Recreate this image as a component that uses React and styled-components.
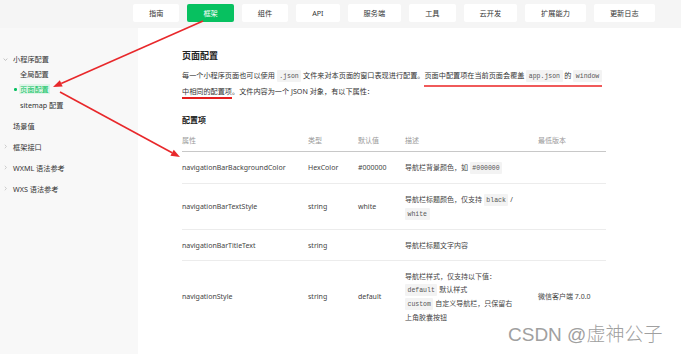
import React from 'react';
import styled, { createGlobalStyle } from 'styled-components';

const Global = createGlobalStyle`
  html, body { margin: 0; padding: 0; background: #fff; }
  body { font-family: "Noto Sans", "Noto Sans CJK SC", sans-serif; color: #333; }
  * { box-sizing: border-box; }
`;

const Page = styled.div`
  position: relative;
  width: 681px;
  height: 354px;
  overflow: hidden;
  display: flex;
  flex-direction: column;
  background: #fff;
`;

const TopBar = styled.nav`
  height: 28px;
  flex: none;
  background: #f5f5f5;
  display: flex;
  align-items: flex-start;
  gap: 8px;
  padding: 4px 0 0 133px;
`;

const NavButton = styled.div`
  height: 18px;
  padding: 0 16px;
  border-radius: 2px;
  background: ${p => (p.$active ? '#07c160' : '#fff')};
  color: ${p => (p.$active ? '#fff' : '#333')};
  font-size: 7.2px;
  line-height: 18px;
  white-space: nowrap;
`;

const Body = styled.div`
  flex: 1;
  display: flex;
`;

const Sidebar = styled.aside`
  width: 138px;
  flex: none;
  background: #f8f8f8;
  padding-top: 23.5px;
  display: flex;
  flex-direction: column;
  gap: 6px;
  font-size: 7.2px;
`;

const SectionHead = styled.div`
  height: 15px;
  display: flex;
  align-items: center;
  gap: 5px;
  padding-left: ${p => (p.$plain ? '13px' : '3px')};
  color: #333;
  white-space: nowrap;
`;

const Chevron = styled.svg`
  width: 5px;
  height: 5px;
  flex: none;
`;

const SubItem = styled.div`
  height: 15.3px;
  display: flex;
  align-items: center;
  padding-left: 14px;
  color: ${p => (p.$active ? '#07c160' : '#333')};
  white-space: nowrap;
`;

const Dot = styled.span`
  width: 2.5px;
  height: 2.5px;
  border-radius: 50%;
  margin-right: 3.5px;
  background: ${p => (p.$on ? '#07c160' : 'transparent')};
`;

const ActiveLabel = styled.span`
  background: #ddf5e7;
  padding: 0 1px;
  margin-left: -1px;
`;

const Main = styled.main`
  flex: 1;
  padding: 21px 0 0 44px;
`;

const Title = styled.h1`
  margin: 0;
  font-size: 9px;
  line-height: 14px;
  font-weight: 700;
  color: #222;
`;

const Para = styled.p`
  margin: 4.5px 0 0;
  font-size: 7.15px;
  line-height: 15px;
  color: #333;
  white-space: nowrap;
`;

const Mark = styled.span`
  border-bottom: 2px solid ${p => p.$color};
  padding-bottom: ${p => p.$gap}px;
`;

const Code = styled.code`
  font-family: "Liberation Mono", "DejaVu Sans Mono", monospace;
  font-size: 6.5px;
  background: #f3f3f3;
  color: #555;
  padding: 2.5px 2.5px;
  border-radius: 1px;
`;

const SubTitle = styled.h2`
  margin: 15px 0 0;
  font-size: 8px;
  line-height: 12px;
  font-weight: 700;
  color: #222;
`;

const Table = styled.div`
  margin-top: 4.5px;
  width: 424px;
  font-size: 7px;
`;

const Row = styled.div`
  display: grid;
  grid-template-columns: 126px 50px 47px 133px 68px;
  align-items: center;
  border-bottom: ${p => (p.$last ? 'none' : `1px solid ${p.$head ? '#c8c8c8' : '#ececec'}`)};
`;

const Cell = styled.div`
  padding: ${p => (p.$head ? '4px 0' : '8.5px 0')};
  line-height: 13px;
  color: ${p => (p.$head ? '#999' : '#444')};
  white-space: nowrap;
`;

const Watermark = styled.div`
  position: absolute;
  left: 508px;
  top: 323px;
  font-family: "Liberation Sans", "Noto Sans CJK SC", sans-serif;
  font-size: 19px;
  line-height: 24px;
  font-weight: 300;
  color: #a0a0a0;
  white-space: nowrap;
  text-shadow: 0 0 2px #fff;
  pointer-events: none;
`;

const Overlay = styled.svg`
  position: absolute;
  left: 0;
  top: 0;
  width: 681px;
  height: 354px;
  pointer-events: none;
`;

const navs = ['指南', '框架', '组件', 'API', '服务端', '工具', '云开发', '扩展能力', '更新日志'];

const Down = () => (
  <Chevron viewBox="0 0 5 5">
    <path d="M0.6 1.6 L2.5 3.4 L4.4 1.6" fill="none" stroke="#aaa" strokeWidth="0.7" />
  </Chevron>
);
const Right = () => (
  <Chevron viewBox="0 0 5 5">
    <path d="M1.8 0.7 L3.4 2.5 L1.8 4.3" fill="none" stroke="#bbb" strokeWidth="0.7" />
  </Chevron>
);

const rows = [
  {
    name: 'navigationBarBackgroundColor',
    type: 'HexColor',
    def: '#000000',
    desc: <>导航栏背景颜色，如 <Code>#000000</Code></>,
    ver: '',
  },
  {
    name: 'navigationBarTextStyle',
    type: 'string',
    def: 'white',
    desc: <>导航栏标题颜色，仅支持 <Code>black</Code> /<br /><Code>white</Code></>,
    ver: '',
  },
  {
    name: 'navigationBarTitleText',
    type: 'string',
    def: '',
    desc: <>导航栏标题文字内容</>,
    ver: '',
  },
  {
    name: 'navigationStyle',
    type: 'string',
    def: 'default',
    desc: (
      <>
        导航栏样式，仅支持以下值：<br />
        <Code>default</Code> 默认样式<br />
        <Code>custom</Code> 自定义导航栏，只保留右<br />
        上角胶囊按钮
      </>
    ),
    ver: '微信客户端 7.0.0',
  },
];

export default function App() {
  return (
    <Page>
      <Global />
      <TopBar>
        {navs.map(n => (
          <NavButton key={n} $active={n === '框架'}>{n}</NavButton>
        ))}
      </TopBar>
      <Body>
        <Sidebar>
          <div>
            <SectionHead><Down />小程序配置</SectionHead>
            <SubItem><Dot />全局配置</SubItem>
            <SubItem $active><Dot $on /><ActiveLabel>页面配置</ActiveLabel></SubItem>
            <SubItem><Dot />sitemap 配置</SubItem>
          </div>
          <SectionHead $plain>场景值</SectionHead>
          <SectionHead><Right />框架接口</SectionHead>
          <SectionHead><Right />WXML 语法参考</SectionHead>
          <SectionHead><Right />WXS 语法参考</SectionHead>
        </Sidebar>
        <Main>
          <Title>页面配置</Title>
          <Para>
            每一个小程序页面也可以使用 <Code>.json</Code> 文件来对本页面的窗口表现进行配置。<Mark $color="#f05a5a" $gap={5}>页面中配置项在当前页面会覆盖 <Code>app.json</Code> 的 <Code>window</Code></Mark>
            <br />
            <Mark $color="#e41e1e" $gap={1.5}>中相同的配置项</Mark>。文件内容为一个 JSON 对象，有以下属性：
          </Para>
          <SubTitle>配置项</SubTitle>
          <Table>
            <Row $head>
              <Cell $head>属性</Cell>
              <Cell $head>类型</Cell>
              <Cell $head>默认值</Cell>
              <Cell $head>描述</Cell>
              <Cell $head>最低版本</Cell>
            </Row>
            {rows.map((r, i) => (
              <Row key={r.name} $last={i === rows.length - 1}>
                <Cell>{r.name}</Cell>
                <Cell>{r.type}</Cell>
                <Cell>{r.def}</Cell>
                <Cell>{r.desc}</Cell>
                <Cell>{r.ver}</Cell>
              </Row>
            ))}
          </Table>
        </Main>
      </Body>
      <Overlay viewBox="0 0 681 354">
        <line x1="203" y1="21" x2="61.2" y2="83.4" stroke="#e8282b" strokeWidth="1.6" />
        <polygon points="53,87 62.65,86.57 59.83,80.17" fill="#e8282b" />
        <line x1="60" y1="92" x2="172.1" y2="152.7" stroke="#e8282b" strokeWidth="1.6" />
        <polygon points="180,157 170.42,155.8 173.76,149.64" fill="#e8282b" />
      </Overlay>
      <Watermark>CSDN @虚神公子</Watermark>
    </Page>
  );
}
